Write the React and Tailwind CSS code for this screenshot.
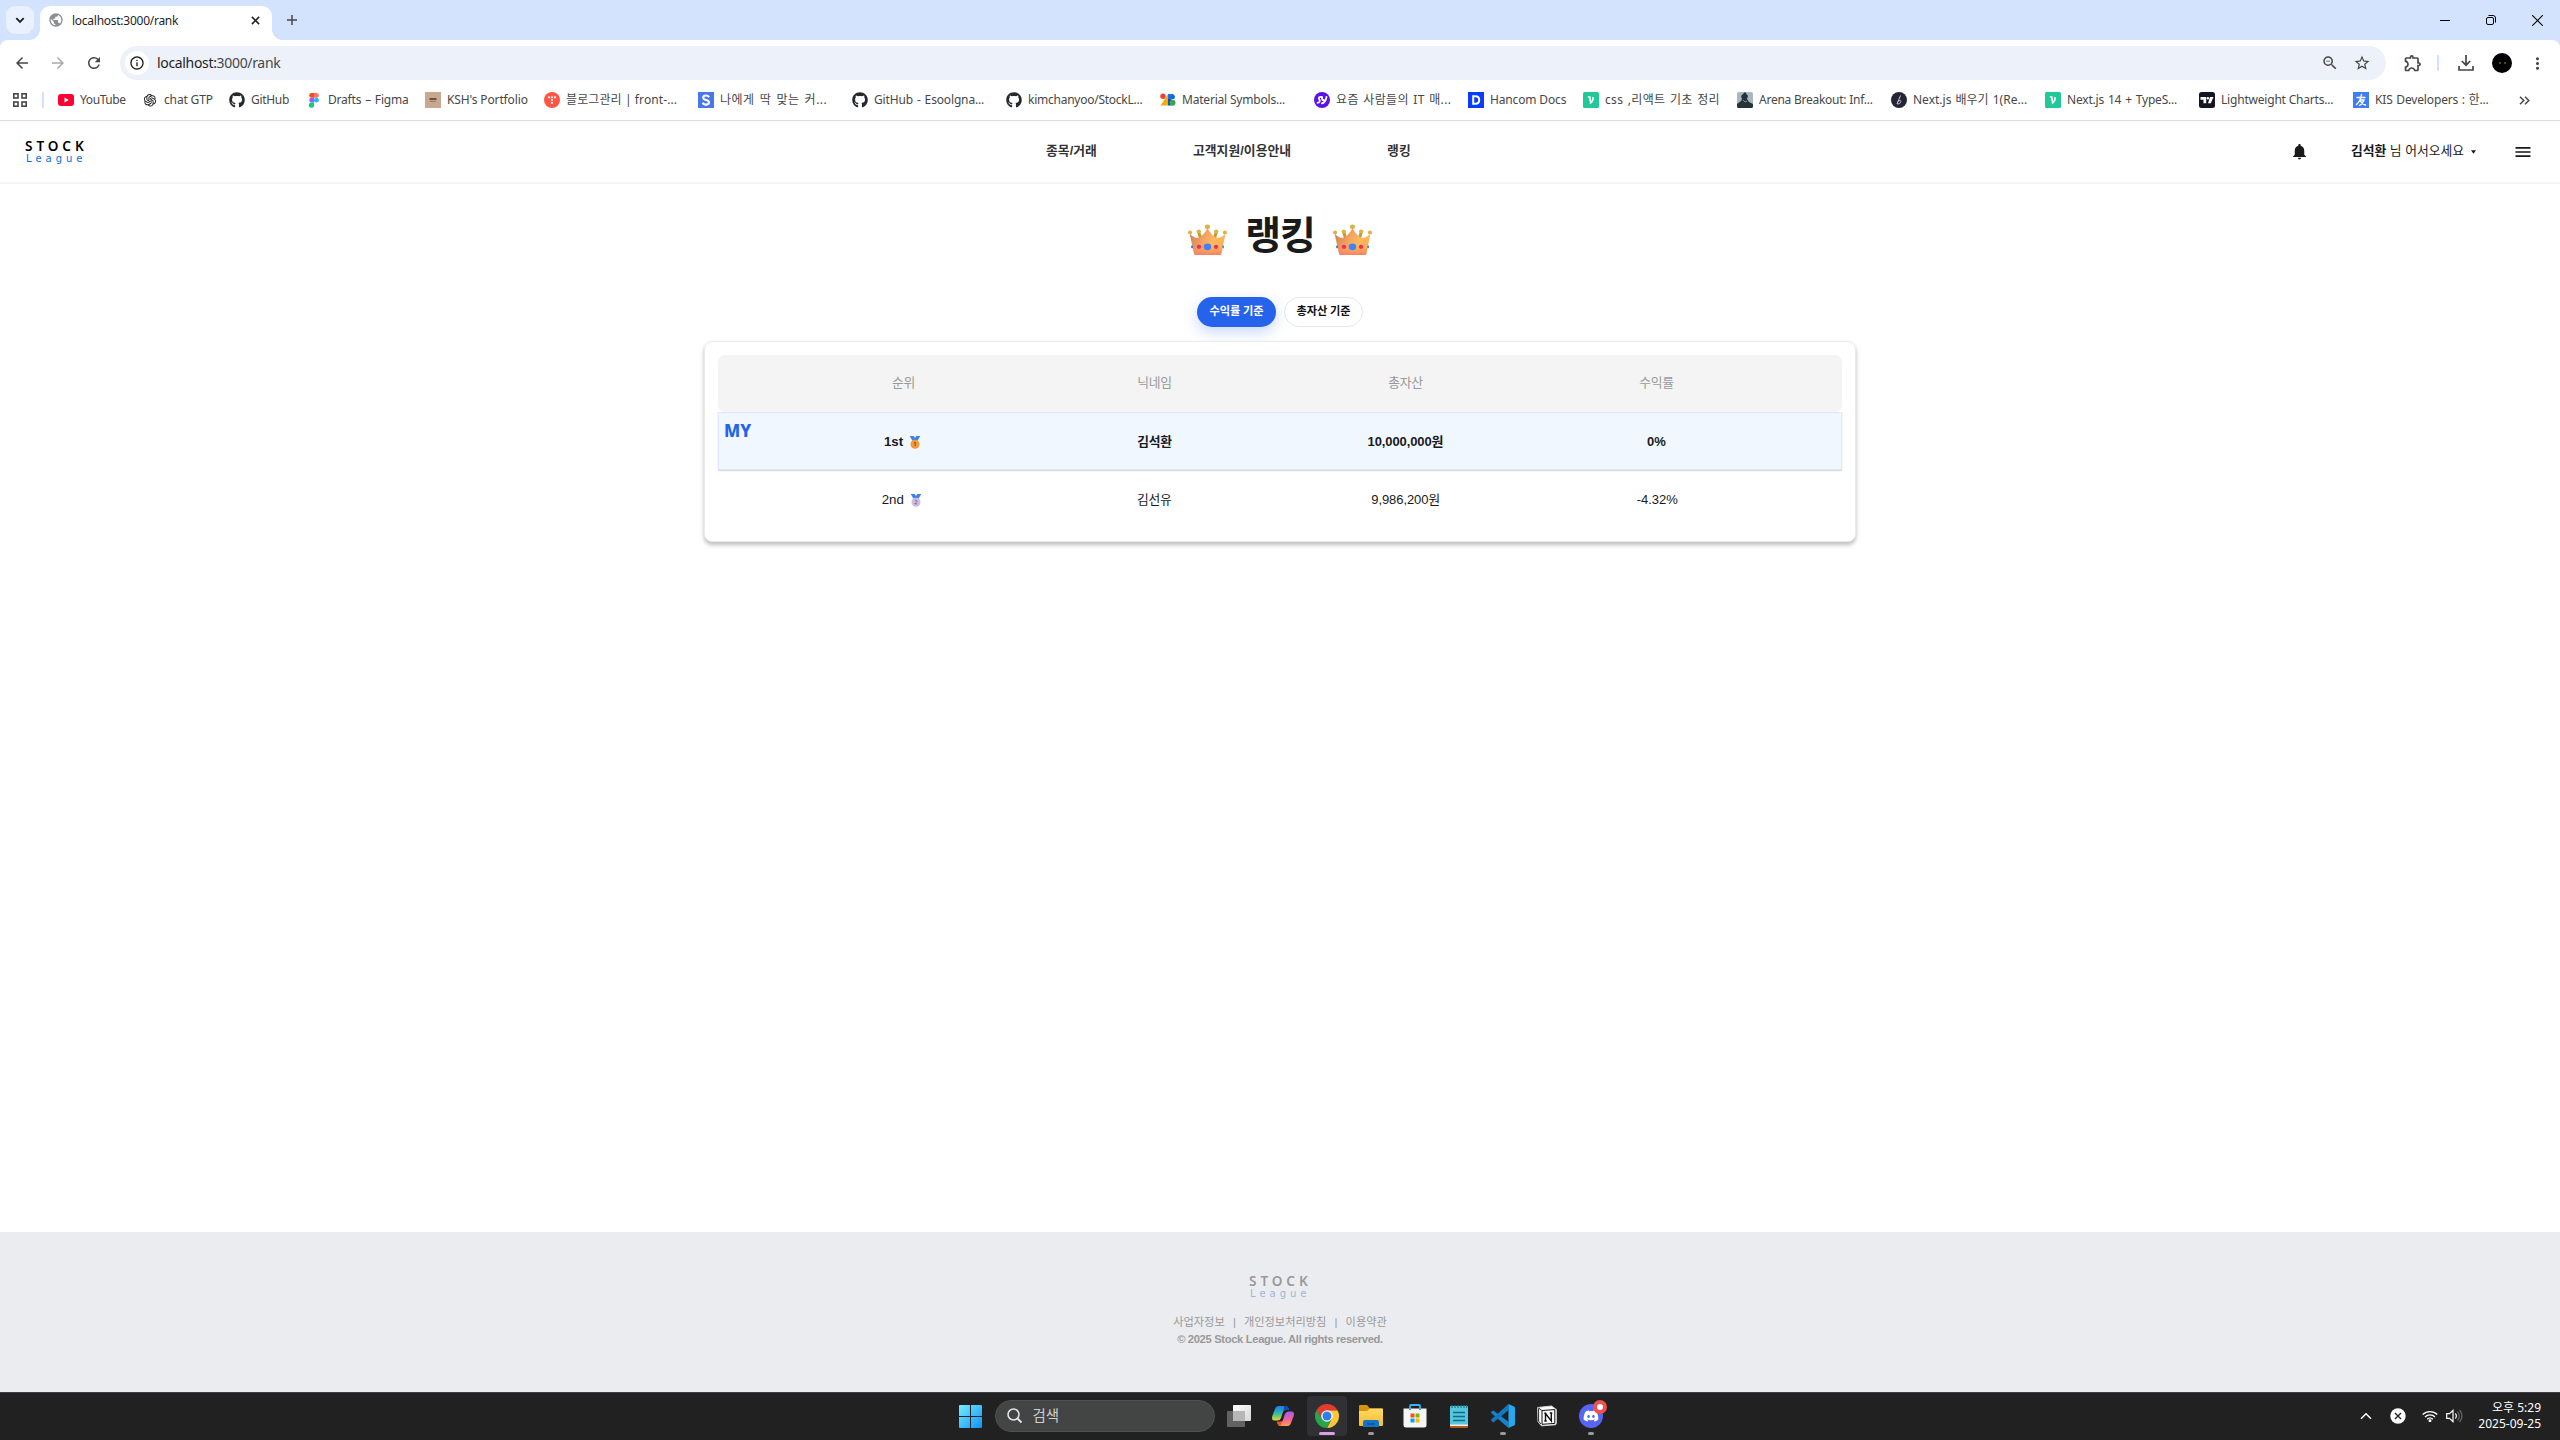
import React from "react";
import { FaGithub, FaDiscord } from "react-icons/fa";
import { AiOutlineOpenAI } from "react-icons/ai";
import {
  MdArrowBack, MdArrowForward, MdRefresh, MdInfoOutline, MdStarBorder,
  MdOutlineExtension, MdMoreVert, MdNotifications, MdMenu, MdOutlineZoomOut, MdPublic,
} from "react-icons/md";

const uiFont = "font-['Noto_Sans','Noto_Sans_CJK_KR',sans-serif]";
const pageFont = "font-['Liberation_Sans','Noto_Sans_CJK_KR',sans-serif]";

/* ---------- bookmark icons ---------- */
const YouTube = () => (
  <svg viewBox="0 0 16 16" className="size-4"><rect y="2" width="16" height="12" rx="3" fill="#ff0033" /><path d="M6.5 5.4v5.2L10.8 8z" fill="#fff" /></svg>
);
const Figma = () => (
  <svg viewBox="0 0 16 16" className="size-4">
    <path d="M8 1H5.6a2.4 2.4 0 0 0 0 4.8H8z" fill="#f24e1e" />
    <path d="M8 1h2.4a2.4 2.4 0 0 1 0 4.8H8z" fill="#ff7262" />
    <path d="M8 5.8H5.6a2.4 2.4 0 0 0 0 4.8H8z" fill="#a259ff" />
    <circle cx="10.4" cy="8.2" r="2.4" fill="#1abcfe" />
    <path d="M8 10.6H5.6A2.6 2.6 0 1 0 8 13.2z" fill="#0acf83" />
  </svg>
);
const Portfolio = () => (
  <svg viewBox="0 0 16 16" className="size-4"><rect width="16" height="16" fill="#c8a98f" /><path d="M4.5 7h7" stroke="#5d4a3d" strokeWidth="1.8" /><path d="M5 9.4h6" stroke="#8f7763" strokeWidth="1" /></svg>
);
const Tistory = () => (
  <svg viewBox="0 0 16 16" className="size-4"><circle cx="8" cy="8" r="8" fill="#ff5544" />
    {[[5, 5.3], [8, 5.3], [11, 5.3], [8, 8], [8, 10.8]].map(([x, y]) => <circle key={`${x}-${y}`} cx={x} cy={y} r="1.1" fill="#fff" />)}
  </svg>
);
const SIcon = () => (
  <svg viewBox="0 0 16 16" className="size-4"><rect width="16" height="16" fill="#4876ef" /><path d="M11 5.2C10.400 3.900 9.400 3.500 8 3.500c-1.700 0-2.800.8-2.800 2.200 0 3 5.800 1.500 5.800 4.600 0 1.400-1.200 2.300-3 2.300-1.600 0-2.800-.7-3.200-2" fill="none" stroke="#fff" strokeWidth="2.100" /></svg>
);
const MaterialIcon = () => (
  <svg viewBox="0 0 16 16" className="size-4">
    <circle cx="3" cy="4.300" r="2.700" fill="#ea4335" /><path d="M.5 13.500 8 2v11.500z" fill="#fbab05" />
    <path d="M8 2h5.500v5H8z" fill="#1a73e8" /><path d="M8 7h3.500v6.500H8z" fill="#174ea6" />
    <circle cx="12.800" cy="5" r="2.200" fill="#1967d2" /><circle cx="12.500" cy="10.700" r="3" fill="#34a853" />
  </svg>
);
const Yozm = () => (
  <svg viewBox="0 0 16 16" className="size-4"><circle cx="8" cy="8" r="8" fill="#5b12e6" /><path d="M7.300 4.800C5.200 4.600 4.400 5.800 5.200 7.200c.8 1.300 1.200 3.300-1.700 3.600M8.200 5.200c-.6 2.300 0 3.300 1.500 2.800M12.500 5c-.7 3.600-2.200 6-4.700 6.300" fill="none" stroke="#fff" strokeWidth="1.800" strokeLinecap="round" /></svg>
);
const Hancom = () => (
  <svg viewBox="0 0 16 16" className="size-4"><rect width="16" height="16" fill="#0a3cff" /><path d="M5.200 4.200h2.300c2.300 0 3.700 1.500 3.700 3.800s-1.400 3.800-3.700 3.800H5.200z" fill="none" stroke="#fff" strokeWidth="2" /></svg>
);
const Velog = () => (
  <svg viewBox="0 0 16 16" className="size-4"><rect width="16" height="16" rx="1.500" fill="#20c997" /><path d="M4.800 5h2l.8 6c1.800-1.600 2.800-3.500 2.600-6" fill="none" stroke="#fff" strokeWidth="1.600" /></svg>
);
const Arena = () => (
  <svg viewBox="0 0 16 16" className="size-4"><rect width="16" height="16" rx="2" fill="#a9b8bf" /><path d="M0 12l4-3 1-2-1-3 4-4 3 4-1 3 2 3 4 2v3l-1 1H1l-1-1z" fill="#26333a" /><path d="M6 8l2 2 2-1" stroke="#7f9099" fill="none" /></svg>
);
const NextLearn = () => (
  <svg viewBox="0 0 16 16" className="size-4"><circle cx="8" cy="8" r="8" fill="#252635" /><path d="M6 12 9.500 3.500M6.500 9.500c2.500-2 4.500-1 2.500 1.500-1 1.200-2.500 1-3 .5" fill="none" stroke="#c9c9d4" strokeWidth="1" /></svg>
);
const TradingView = () => (
  <svg viewBox="0 0 16 16" className="size-4"><rect width="16" height="16" rx="2.500" fill="#131722" /><path d="M1.500 5h5.700v6.300H4.500V7.700h-3z" fill="#fff" /><circle cx="8.900" cy="6.200" r="1.200" fill="#fff" /><path d="M11 5h3.500l-2.700 6.300H9z" fill="#fff" /></svg>
);
const Kis = () => (
  <svg viewBox="0 0 16 16" className="size-4"><rect width="16" height="16" fill="#3f7cf6" /><path d="M4 5.500h8M8.500 2.500C8 6 6.500 10 3.500 12.500M7.500 8h3.500c-.8 2.500-2 4-4.500 5.500M7.500 9c1 2 2.500 3.500 5 4" fill="none" stroke="#fff" strokeWidth="1.400" strokeLinecap="round" /></svg>
);
const Git = () => <FaGithub className="size-4 text-[#24292f]" />;
const Gpt = () => <AiOutlineOpenAI className="size-4 text-[#222]" />;

const bookmarks = [
  { icon: YouTube, w: "w-[84px]", t: "YouTube", k: "tracking-[-0.4px]" },
  { icon: Gpt, w: "w-[87px]", t: "chat GTP", k: "tracking-[-0.15px]" },
  { icon: Git, w: "w-[77px]", t: "GitHub", k: "tracking-[-0.3px]" },
  { icon: Figma, w: "w-[119px]", t: "Drafts – Figma", k: "tracking-[-0.2px] [word-spacing:1px]" },
  { icon: Portfolio, w: "w-[119px]", t: "KSH's Portfolio", k: "tracking-[-0.13px]" },
  { icon: Tistory, w: "w-[154px]", t: "블로그관리 | front-...", k: "tracking-[0.1px]" },
  { icon: SIcon, w: "w-[154px]", t: "나에게 딱 맞는 커...", k: "tracking-[0.5px] [word-spacing:1.500px]" },
  { icon: Git, w: "w-[154px]", t: "GitHub - Esoolgna...", k: "tracking-[-0.15px] [word-spacing:1px]" },
  { icon: Git, w: "w-[154px]", t: "kimchanyoo/StockL...", k: "tracking-[-0.25px]" },
  { icon: MaterialIcon, w: "w-[154px]", t: "Material Symbols...", k: "tracking-[-0.2px]" },
  { icon: Yozm, w: "w-[154px]", t: "요즘 사람들의 IT 매...", k: "tracking-[0.35px] [word-spacing:1px]" },
  { icon: Hancom, w: "w-[115px]", t: "Hancom Docs", k: "tracking-[-0.15px]" },
  { icon: Velog, w: "w-[154px]", t: "css ,리액트 기초 정리", k: "tracking-[0.35px] [word-spacing:1px]" },
  { icon: Arena, w: "w-[154px]", t: "Arena Breakout: Inf...", k: "tracking-[-0.25px]" },
  { icon: NextLearn, w: "w-[154px]", t: "Next.js 배우기 1(Re...", k: "tracking-[0px] [word-spacing:1px]" },
  { icon: Velog, w: "w-[154px]", t: "Next.js 14 + TypeS...", k: "tracking-[-0.2px] [word-spacing:1px]" },
  { icon: TradingView, w: "w-[154px]", t: "Lightweight Charts...", k: "tracking-[-0.2px]" },
  { icon: Kis, w: "w-[154px]", t: "KIS Developers : 한...", k: "tracking-[-0.15px] [word-spacing:0.700px]" },
];

/* ---------- browser chrome ---------- */
function TabStrip() {
  return (
    <div className="flex h-10 bg-[#d3e3fd]">
      <div className="ml-1.5 mt-1.5 flex size-7 items-center justify-center rounded-[9px] bg-[#e9f0fe]">
        <svg viewBox="0 0 10 10" className="size-2.5"><path d="M1.300 3.200 5 6.900l3.700-3.700" fill="none" stroke="#1f1f1f" strokeWidth="1.800" /></svg>
      </div>
      <div className="relative ml-1.5 mt-1.5 flex h-[34px] w-[232px] items-center rounded-t-[10px] bg-white pl-[9px] pb-[6px]">
        <MdPublic className="size-4 -ml-[1px] text-[#8b9096]" />
        <span className="ml-2 mt-[2px] text-[12px] leading-4 tracking-[-0.260px] text-[#1f1f1f]">localhost:3000/rank</span>
        <svg viewBox="0 0 10 10" className="ml-auto mr-3 size-[9px]"><path d="m1 1 8 8M9 1 1 9" stroke="#1f1f1f" strokeWidth="1.700" /></svg>
        <span className="absolute -left-[10px] bottom-0 size-[10px] bg-[radial-gradient(circle_at_0_0,#d3e3fd_9.500px,#fff_10px)]" />
        <span className="absolute -right-[10px] bottom-0 size-[10px] bg-[radial-gradient(circle_at_100%_0,#d3e3fd_9.500px,#fff_10px)]" />
      </div>
      <svg viewBox="0 0 10 10" className="ml-[15px] mt-[15px] size-[10px]"><path d="M5 0v10M0 5h10" stroke="#474747" strokeWidth="1.500" /></svg>
      <div className="ml-auto mt-[14px] flex h-3 items-center gap-9 pr-[17px]">
        <svg viewBox="0 0 10 10" className="size-[10px]"><path d="M0 5.500h10" stroke="#000" /></svg>
        <svg viewBox="0 0 10 10" className="size-[10px]"><rect x=".5" y="2.500" width="7" height="7" rx="1.500" fill="none" stroke="#000" /><path d="M2.500.5h4.500a2.500 2.500 0 0 1 2.500 2.500v4.500" fill="none" stroke="#000" /></svg>
        <svg viewBox="0 0 10 10" className="size-[11px]"><path d="m0 0 10 10M10 0 0 10" stroke="#000" strokeWidth="1" /></svg>
      </div>
    </div>
  );
}

function AddressBar() {
  return (
    <div className="bg-[#d3e3fd]">
      <div className="flex h-[46px] items-center rounded-t-[8px] bg-white text-[#474747]">
        <MdArrowBack className="ml-[13px] size-[18px]" />
        <MdArrowForward className="ml-[18px] size-[18px] text-[#aaa]" />
        <MdRefresh className="ml-[18px] size-[18px]" />
        <div className="ml-[17px] flex h-[34px] w-[2266px] items-center rounded-full bg-[#edf1fa] pl-[5px]">
          <span className="flex size-6 items-center justify-center rounded-full bg-white"><MdInfoOutline className="size-4 text-[#1f1f1f]" /></span>
          <span className="ml-2 text-[14px] leading-5 tracking-[-0.330px] text-[#474747]"><span className="text-[#1f1f1f]">localhost:</span>3000/rank</span>
          <MdOutlineZoomOut className="ml-auto size-[18px]" />
          <MdStarBorder className="ml-[14px] mr-[15px] size-[18px]" />
        </div>
        <MdOutlineExtension className="ml-[17px] size-[20px]" />
        <span className="ml-[14px] h-4 w-[2px] bg-[#d3e3fd]" />
        <svg viewBox="0 0 16 16" className="ml-[19px] size-4"><path d="M8 0v10M3.800 6 8 10.200 12.200 6M1 11v4h14v-4" fill="none" stroke="#474747" strokeWidth="1.700" /></svg>
        <span className="ml-[18px] flex size-5 items-center justify-center gap-[3px] rounded-full bg-black"><i className="size-[2px] rounded-full bg-[#6b5a20]" /><i className="size-[2px] rounded-full bg-[#6b5a20]" /></span>
        <MdMoreVert className="ml-[16px] size-[19px]" />
      </div>
    </div>
  );
}

function Bookmarks() {
  return (
    <div className="flex h-[35px] items-center border-b border-[#dcdcdc] bg-white pb-[6px]">
      <svg viewBox="0 0 14 14" className="ml-[13px] size-[14px]" fill="none" stroke="#474747" strokeWidth="1.600"><rect x=".8" y=".8" width="4.200" height="4.200" /><rect x="9" y=".8" width="4.200" height="4.200" /><rect x=".8" y="9" width="4.200" height="4.200" /><rect x="9" y="9" width="4.200" height="4.200" /></svg>
      <span className="ml-[15px] mr-[14px] h-4 w-[2px] bg-[#d3e3fd]" />
      {bookmarks.map((b) => (
        <div key={b.t} className={`flex shrink-0 items-center gap-1.5 ${b.w}`}>
          <b.icon />
          <span className={`whitespace-nowrap text-[12px] leading-4 text-[#474747] ${b.k}`}>{b.t}</span>
        </div>
      ))}
      <svg viewBox="0 0 11 9" className="ml-[12px] h-[9px] w-[11px]"><path d="m1 .7 3.800 3.800L1 8.300M6 .7l3.800 3.800L6 8.300" fill="none" stroke="#474747" strokeWidth="1.500" /></svg>
    </div>
  );
}

/* ---------- page ---------- */
function Logo({ muted }) {
  return (
    <div className="w-[66px] whitespace-nowrap">
      <div className={`font-['Noto_Sans',sans-serif] text-[13.600px] font-semibold leading-[14px] tracking-[3.900px] ${muted ? "text-[#999]" : "text-black"}`}>STOCK</div>
      <div className={`pl-px font-['DejaVu_Sans',sans-serif] text-[10px] leading-[11px] tracking-[4px] ${muted ? "text-[#9db6d4]" : "text-[#0a6fe0]"}`}>League</div>
    </div>
  );
}

function Header() {
  return (
    <header className="flex h-[63px] items-center border-b-2 border-[#f4f4f4] bg-white text-[12.800px] text-[#1a1a1a]">
      <div className="ml-[25px] pb-px"><Logo /></div>
      <nav className="ml-[955px] flex gap-[96px] pb-px font-bold leading-5 tracking-[0.050px] text-[#333]">
        <span>종목/거래</span><span>고객지원/이용안내</span><span>랭킹</span>
      </nav>
      <div className="ml-auto flex items-center pr-[27px]">
        <MdNotifications className="size-[19px]" />
        <span className="ml-[42px] mr-px pb-px tracking-[0px]"><b>김석환</b> 님 어서오세요</span>
        <svg viewBox="0 0 6 4" className="ml-[6px] h-[4px] w-[5px]"><path d="M0 0h6L3 4z" fill="#1a1a1a" /></svg>
        <MdMenu className="ml-[37px] size-[20px]" />
      </div>
    </header>
  );
}

const crownBody = "M1.500 10c3.500 4 6 5.300 8.500 4.500 3.500-1 6.500-5 9-10 2.500 5 5.500 9 9 10 2.500.8 5-.5 8.500-4.500l-4 22q-.3 1-1.500 1H7.500q-1.200 0-1.500-1z";

function Crown() {
  return (
    <svg viewBox="0 0 38 34" preserveAspectRatio="none" className="h-[32px] w-[39px]">
      <defs>
        <linearGradient id="crown" x1="0" y1="0" x2="1" y2="0.400"><stop offset="0" stopColor="#c87951" /><stop offset=".5" stopColor="#f6a463" /><stop offset=".75" stopColor="#fdb95c" /><stop offset="1" stopColor="#fdb055" /></linearGradient>
        <linearGradient id="crownBase" x1="0" y1="0" x2="0" y2="1"><stop offset=".7" stopColor="#ff7860" stopOpacity="0" /><stop offset="1" stopColor="#f3706a" stopOpacity=".75" /></linearGradient>
      </defs>
      <path d="M10.500 9l2 7M27.500 9l-2 7" stroke="#c69a2f" strokeWidth="3" />
      <path d={crownBody} fill="url(#crown)" />
      <path d={crownBody} fill="url(#crownBase)" />
      {[[2, 9, 2], [10.500, 8, 2.100], [19, 3, 2.500], [27.500, 8, 2.100], [36, 9, 2]].map(([x, y, r]) => <circle key={x} cx={x} cy={y} r={r} fill="#dcb344" />)}
      <circle cx="19" cy="24.300" r="3.700" fill="#3f83f8" /><circle cx="10.700" cy="24.300" r="2.200" fill="#ee2f55" /><circle cx="27.300" cy="24.300" r="2.200" fill="#ee2f55" />
      <ellipse cx="4" cy="24.300" rx="1" ry="1.800" fill="#3f74d8" /><ellipse cx="34.200" cy="24.300" rx="1" ry="1.800" fill="#3f90e8" />
    </svg>
  );
}

function Medal({ first }) {
  return (
    <svg viewBox="0 0 12 14" className="h-[14px] w-3">
      <path d="M.7 1h4L6 3l1.300-2h4L8.500 5.800h-5z" fill="#3f82ea" />
      <circle cx="6" cy="9.200" r="4.500" fill={first ? "#f59a38" : "#cbbce2"} />
      {first
        ? <path d="M5.200 8l1-.8v4" fill="none" stroke="#8c4a1c" strokeWidth="1" />
        : <path d="M4.900 7.900c.5-1 2.300-.7 2.100.4-.1.8-1.500 1.300-2.100 2.500h2.300" fill="none" stroke="#7a648f" strokeWidth=".9" />}
    </svg>
  );
}

const rows = [
  { rank: "1st", name: "김석환", asset: "10,000,000원", rate: "0%", mine: true },
  { rank: "2nd", name: "김선유", asset: "9,986,200원", rate: "-4.32%", mine: false },
];

function RankTable() {
  return (
    <section className="mt-[14px] h-[201px] w-[1152px] rounded-[8px] border border-[#ebebeb] bg-white px-[13px] pt-[13px] text-[12.800px] shadow-[0_3px_4px_rgba(0,0,0,0.26)]">
      <div className="grid h-[57px] grid-cols-4 items-center rounded-[7px] bg-[#f4f4f4] px-[60px] pb-[2px] text-center tracking-[-0.2px] text-[#999]">
        <span>순위</span><span>닉네임</span><span>총자산</span><span>수익률</span>
      </div>
      {rows.map((r) => (
        <div
          key={r.rank}
          className={`relative grid h-[58px] grid-cols-4 items-center px-[59px] pt-px text-center text-[#1a1a1a] ${r.mine ? "border border-[#dbe8fd] bg-[#f0f7ff] font-bold shadow-[0_1px_1px_rgba(0,0,0,0.14)]" : ""}`}
        >
          {r.mine && <span className="absolute left-[5px] top-[8px] font-['Noto_Sans',sans-serif] text-[17px] font-extrabold leading-5 text-[#2563eb]">MY</span>}
          <span className="flex items-center justify-center gap-[6px] pr-[2px] text-[13.300px]">{r.rank}<Medal first={r.mine} /></span>
          <span className="tracking-[-0.2px]">{r.name}</span>
          <span className="text-[13px] tracking-[-0.1px]">{r.asset}</span>
          <span className="text-[13px]">{r.rate}</span>
        </div>
      ))}
    </section>
  );
}

function Footer() {
  return (
    <footer className="flex h-[160px] flex-col items-center bg-[#ebecf0] pt-[42px] text-[11.200px] text-[#999]">
      <div className="pl-[4px]"><Logo muted /></div>
      <div className="mt-[15px] flex gap-[8.200px] leading-4"><span>사업자정보</span><span>|</span><span>개인정보처리방침</span><span>|</span><span>이용약관</span></div>
      <div className="mt-[1px] font-bold leading-4 tracking-[-0.330px]">© 2025 Stock League. All rights reserved.</div>
    </footer>
  );
}

/* ---------- taskbar ---------- */
function Cell({ children, active, running }) {
  return (
    <div className={`relative mx-[2px] flex size-10 items-center justify-center rounded-[4px] ${active ? "bg-[#303134]" : ""}`}>
      {children}
      {active && <i className="absolute bottom-[1px] left-3 h-[3px] w-4 rounded-full bg-[#d9a0e3]" />}
      {running && <i className="absolute bottom-[1px] left-[17px] h-[3px] w-1.5 rounded-full bg-[#9a9a9a]" />}
    </div>
  );
}

function Taskbar() {
  return (
    <div className="grid h-12 grid-cols-[1fr_auto_1fr] items-center border-t border-[#3c3c42] bg-[#212121] pb-px">
      <span />
      <div className="flex items-center pl-[2px]">
        <div className="ml-[1px] flex size-10 items-center justify-center">
          <svg viewBox="0 0 23 23" className="size-[23px]">
            <defs><linearGradient id="win" x1="0" y1="0" x2="1" y2="1"><stop stopColor="#77ecff" /><stop offset="1" stopColor="#0d92f7" /></linearGradient></defs>
            <path d="M0 1q0-1 1-1h10v11H0zM12 0h10q1 0 1 1v10H12zM0 12h11v11H1q-1 0-1-1zM12 12h11v10q0 1-1 1H12z" fill="url(#win)" />
          </svg>
        </div>
        <div className="ml-[4px] mr-[2px] flex h-8 w-[220px] items-center rounded-full border border-[#505050] bg-[#434444] pl-[11px] text-[14.500px] text-[#cfcfcf]">
          <svg viewBox="0 0 16 16" className="size-4"><circle cx="6.500" cy="6.500" r="5.500" fill="none" stroke="#e6e6ec" strokeWidth="1.500" /><path d="m10.500 10.500 4 4" stroke="#e6e6ec" strokeWidth="1.800" /></svg>
          <span className="ml-[10px]">검색</span>
        </div>
        <Cell>
          <svg viewBox="0 0 24 22" className="h-[22px] w-6"><defs><linearGradient id="tv" x1="0" y1="0" x2="1" y2="1"><stop stopColor="#fff" /><stop offset="1" stopColor="#d6d6d6" /></linearGradient></defs><rect x="6" width="18" height="16" rx="1" fill="url(#tv)" /><rect y="6" width="18" height="16" rx="1" fill="#6d6d6d" fillOpacity=".85" /><path d="M6 6h12v10H6z" fill="#b7b7b7" /></svg>
        </Cell>
        <Cell>
          <svg viewBox="0 0 22 20" className="h-5 w-[22px]">
            <defs>
              <linearGradient id="cpA" x1="0" y1="0" x2="0" y2="1"><stop stopColor="#1a7de8" /><stop offset=".5" stopColor="#35b6a6" /><stop offset="1" stopColor="#e7d62b" /></linearGradient>
              <linearGradient id="cpB" x1="0" y1="0" x2="0" y2="1"><stop stopColor="#a35cf0" /><stop offset=".55" stopColor="#f0619a" /><stop offset="1" stopColor="#ffa04d" /></linearGradient>
            </defs>
            <path d="M6.500 0H14q2 0 3 4h-3.500q-2 0-2.500 2l-2 6q-1 2.500-3.500 2.500H2.500Q-.8 14.500.3 10L3 3q1-3 3.500-3z" fill="url(#cpA)" />
            <path d="M15.500 20H8q-2 0-3-4h3.500q2 0 2.500-2l2-6q1-2.500 3.500-2.500h3q3.300 0 2.200 4.500L19 17q-1 3-3.500 3z" fill="url(#cpB)" />
            <path d="M12 0h2q2 0 3 4h-3.500q-1.500 0-2 1z" fill="#1745c4" /><path d="M5 15.500h4q1.500 0 1.500-1L8.500 20Q6 20 5 15.500z" fill="#f0532d" />
          </svg>
        </Cell>
        <Cell active>
          <svg viewBox="0 0 24 24" className="size-6">
            <path d="M12 6.500h10.700L22.400 6A12 12 0 0 0 1.600 6l5.600 8.700z" fill="#e33b2e" />
            <path d="M16.800 14.700 12 24A12 12 0 0 0 22.700 6.500H12z" fill="#fcc934" />
            <path d="M1.600 6 7.200 14.700 12 17.500l4.300-2L12 24A12 12 0 0 1 1.600 6z" fill="#2ba24c" />
            <circle cx="12" cy="12" r="5.800" fill="#fff" /><circle cx="12" cy="12" r="4.500" fill="#2f7de9" />
          </svg>
        </Cell>
        <Cell running>
          <svg viewBox="0 0 24 22" className="h-[22px] w-6"><defs><linearGradient id="fold" x1="0" y1="0" x2="0" y2="1"><stop stopColor="#ffd964" /><stop offset="1" stopColor="#f7bd2e" /></linearGradient></defs><path d="M0 1q0-1 1-1h7l3 3.500h12q1 0 1 1V8H0z" fill="#d6940b" /><path d="M0 6h8l3-2.500h12q1 0 1 1V20q0 1-1 1H1q-1 0-1-1z" fill="url(#fold)" /><path d="M4 22v-5q0-2 2-2h12q2 0 2 2v5z" fill="#1273c8" /><path d="M8 19h8" stroke="#0b4f94" strokeWidth="1.300" /></svg>
        </Cell>
        <Cell>
          <svg viewBox="0 0 24 24" className="size-6"><path d="M7 6V2q0-1 1-1h8q1 0 1 1v4" fill="none" stroke="#36b5f2" strokeWidth="1.800" /><path d="M.5 4.500h23V21q0 2.500-2.500 2.500H3Q.5 23.500.5 21z" fill="#f5f5f5" /><path d="M7 6V4.500M17 6V4.500" stroke="#2295d8" strokeWidth="1.800" /><path d="M7.500 9.500h4v4h-4z" fill="#f25022" /><path d="M12.500 9.500h4v4h-4z" fill="#7fba00" /><path d="M7.500 14.500h4v4h-4z" fill="#00a4ef" /><path d="M12.500 14.500h4v4h-4z" fill="#ffb900" /></svg>
        </Cell>
        <Cell>
          <svg viewBox="0 0 20 24" className="h-6 w-5"><rect x="1" y="19" width="18" height="5" rx="1" fill="#b35a1c" /><rect x="1" y="2" width="18" height="19" rx="1" fill="#56c5de" /><path d="M1 20.500h18v1.500H1z" fill="#eee" /><path d="M4 8.500h12M4 12.500h12M4 16.500h12" stroke="#0f6c86" strokeWidth="1.400" /><path d="M3 1v3M6 1v3M9 1v3M12 1v3M15 1v3M17.500 1v3" stroke="#1d7e99" strokeWidth="1.200" /></svg>
        </Cell>
        <Cell running>
          <svg viewBox="0 0 24 24" className="size-6"><path d="M17.500 6.300v11.400L2.300 6.400.2 7.700v1.400L17.500 24z" fill="#1583cf" /><path d="M17.500 0 .2 15.400v1.400l2.100 1.600L17.500 6.300z" fill="#1278c0" /><path d="M17.500 0 23 2.500q1 .5 1 1.500v16q0 1-1 1.500L17.500 24z" fill="#27a7f0" /></svg>
        </Cell>
        <Cell>
          <svg viewBox="0 0 20 22" className="h-[22px] w-5"><path d="M.7 2.500 14.500 1 19.300 4.500v14.200q0 1-1.200 1.100L5 20.800q-.8 0-1.300-.7L1 16.500z" fill="#fff" stroke="#d8d8d8" /><path d="M5 5.500 17.800 4.600v13.800L5 19.300z" fill="#fff" stroke="#111" strokeWidth="1" /><path d="M1.500 3 4.800 5.400M1.600 3.400v12.800L4 19" stroke="#111" fill="none" strokeWidth=".9" /><path d="M8.500 16V8.500l5.800 7.500V8M7.300 8.500h2.200M7.300 16h2.500M12.800 8h2.500" stroke="#111" strokeWidth="1.400" fill="none" /></svg>
        </Cell>
        <Cell running>
          <span className="flex size-6 items-center justify-center rounded-full bg-[#5865f2]"><FaDiscord className="size-4 text-white" /></span>
          <i className="absolute left-[22px] top-[4px] size-[14px] rounded-full border-4 border-[#f05050] bg-white" />
        </Cell>
      </div>
      <div className="flex items-center justify-end pr-[19px] text-white">
        <svg viewBox="0 0 12 8" className="h-2 w-3"><path d="m1 6.800 5-5 5 5" fill="none" stroke="#fff" strokeWidth="1.500" /></svg>
        <svg viewBox="0 0 16 16" className="ml-[18px] size-4"><circle cx="8" cy="8" r="7.700" fill="#fff" /><path d="m5 5 6 6M11 5l-6 6" stroke="#222" strokeWidth="1.400" /></svg>
        <svg viewBox="0 0 16 12" className="ml-[16px] h-3 w-4" fill="none" stroke="#fff" strokeWidth="1.300"><path d="M.7 4.500a10.500 10.500 0 0 1 14.600 0M3 7a7 7 0 0 1 10 0M5.200 9.200a4 4 0 0 1 5.600 0" /><circle cx="8" cy="10.800" r=".8" fill="#fff" /></svg>
        <svg viewBox="0 0 17 14" className="ml-[8px] h-[14px] w-[17px]" fill="none" stroke="#fff" strokeWidth="1.200"><path d="M.7 4.700h2.800L7 1.400v11.200L3.500 9.300H.7z" /><path d="M9.300 4.500a3.500 3.500 0 0 1 0 5" /><path d="M11.500 2.700a6.200 6.200 0 0 1 0 8.600M13.600 1a8.800 8.800 0 0 1 0 12" stroke="#6a6a6a" /></svg>
        <div className="ml-[15px] text-right text-[12px] leading-4"><div>오후 5:29</div><div>2025-09-25</div></div>
      </div>
    </div>
  );
}

export default function App() {
  return (
    <div className={`flex h-[1440px] w-[2560px] flex-col overflow-hidden bg-white ${uiFont}`}>
      <TabStrip />
      <AddressBar />
      <Bookmarks />
      <div className={`flex flex-1 flex-col ${pageFont}`}>
        <Header />
        <main className="flex flex-1 flex-col items-center">
          <h1 className="mt-[24px] flex h-[56px] items-center gap-[19px] text-[39px] font-bold leading-[56px] text-[#1a1a1a]">
            <span className="pt-[8px]"><Crown /></span><span className="-mx-[1px] tracking-[-1.200px]">랭킹</span><span className="pt-[8px]"><Crown /></span>
          </h1>
          <div className="mt-[33px] flex gap-2 text-[11.200px] font-bold tracking-[-0.1px]">
            <button className="h-[30px] w-[79px] rounded-full bg-[#2563eb] pb-[2px] text-white shadow-[0_5px_14px_rgba(37,99,235,0.25)]">수익률 기준</button>
            <button className="h-[30px] w-[79px] rounded-full border border-[#e5e7eb] bg-white pb-[2px] text-[#111]">총자산 기준</button>
          </div>
          <RankTable />
        </main>
        <Footer />
      </div>
      <Taskbar />
    </div>
  );
}
